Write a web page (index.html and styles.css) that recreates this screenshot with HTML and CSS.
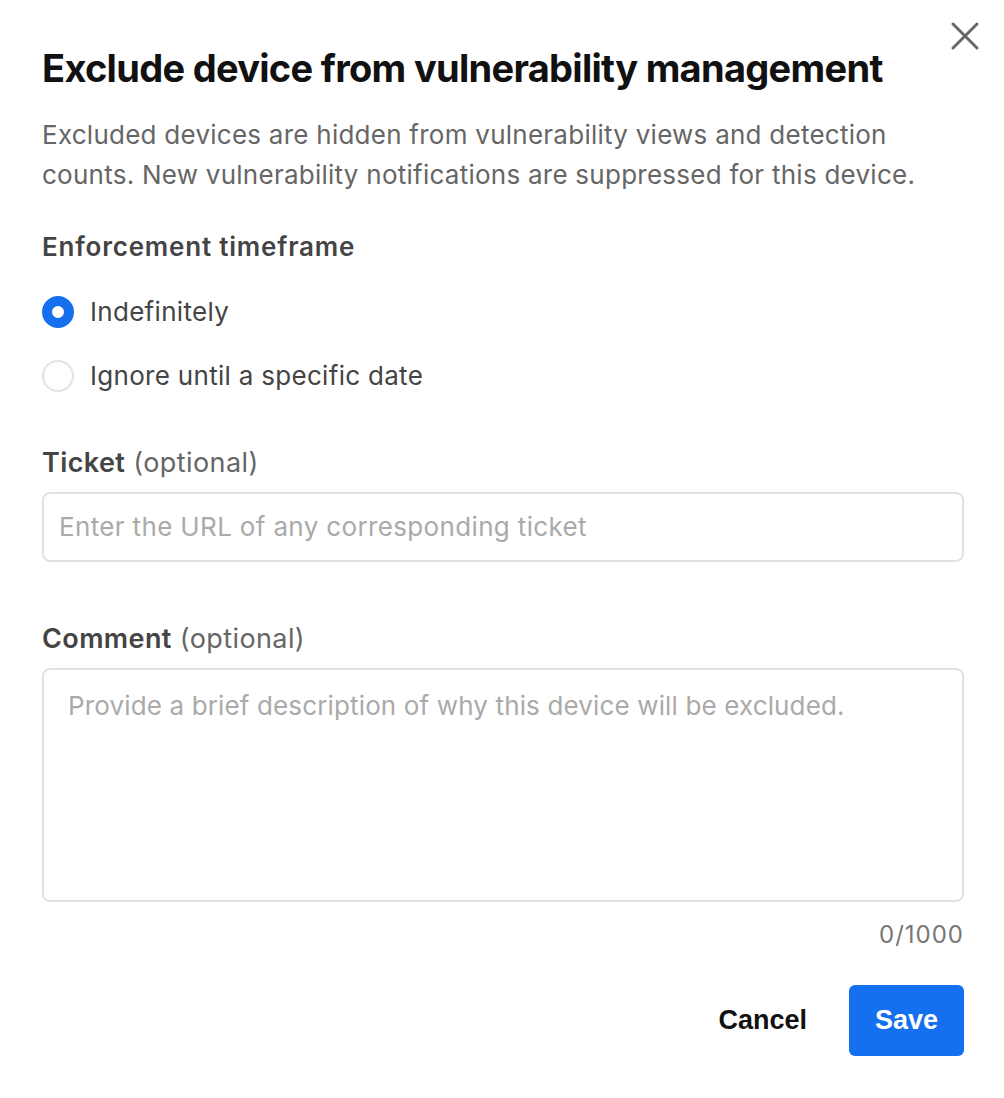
FILE: index.html
```html
<!DOCTYPE html>
<html>
<head>
<meta charset="utf-8">
<link rel="stylesheet" href="styles.css">
</head>
<body>
<div class="modal">
  <button class="close" aria-label="Close">
    <svg width="30" height="30" viewBox="0 0 30 30"><path d="M3 3 L27 27 M27 3 L3 27" stroke="#666" stroke-width="3" stroke-linecap="round" fill="none"/></svg>
  </button>
  <h1 class="title">Exclude device from vulnerability management</h1>
  <p class="desc">Excluded devices are hidden from vulnerability views and detection counts. New vulnerability notifications are suppressed for this device.</p>
  <div class="section-label">Enforcement timeframe</div>
  <div class="radios">
    <label class="radio"><span class="dot checked"></span><span>Indefinitely</span></label>
    <label class="radio"><span class="dot"></span><span>Ignore until a specific date</span></label>
  </div>
  <div class="field ticket">
    <div class="label"><b>Ticket</b> <span>(optional)</span></div>
    <div class="input"><span class="ph">Enter the URL of any corresponding ticket</span></div>
  </div>
  <div class="field comment">
    <div class="label"><b>Comment</b> <span>(optional)</span></div>
    <div class="textarea"><span class="ph ph-long">Provide a brief description of why this device will be excluded.</span></div>
    <div class="count">0/1000</div>
  </div>
  <div class="actions">
    <button class="cancel">Cancel</button>
    <button class="save">Save</button>
  </div>
</div>
</body>
</html>
```
FILE: styles.css
```css
html, body { margin: 0; padding: 0; background: #fff; }
body { font-family: Inter, "Noto Sans", sans-serif; color: #444; }
.modal { position: relative; width: 1004px; height: 1098px; box-sizing: border-box; padding: 42px 40px 0 42px; }
.close { position: absolute; top: 21px; right: 24px; background: none; border: 0; padding: 0; width: 30px; height: 30px; cursor: pointer; }
.title { margin: 0; font-size: 38px; font-weight: 700; color: #111; letter-spacing: -0.7px; line-height: 52px; }
.desc { margin: 21px 0 0; font-size: 26px; line-height: 40px; color: #666; letter-spacing: 0.25px; max-width: 900px; }
.section-label { margin-top: 35px; font-size: 26px; font-weight: 600; line-height: 34px; color: #444; letter-spacing: 0.8px; }
.radios { display: flex; flex-direction: column; gap: 24px; margin-top: 28px; }
.radio { display: flex; align-items: center; gap: 16px; font-size: 26px; line-height: 40px; color: #444; letter-spacing: 0.3px; }
.dot { width: 32px; height: 32px; box-sizing: border-box; border-radius: 50%; border: 2px solid #e2e2e2; background: #fff; }
.dot.checked { border: 10px solid #1570ef; }
.field { display: flex; flex-direction: column; }
.ticket { margin-top: 49px; }
.comment { margin-top: 59px; }
.label { font-size: 27px; line-height: 36px; color: #444; letter-spacing: 0.4px; }
.label b { font-weight: 600; }
.label span { color: #666; }
.input { margin-top: 11px; height: 70px; box-sizing: border-box; border: 2px solid #e2e2e2; border-radius: 8px; display: flex; align-items: center; padding-left: 15px; }
.textarea { margin-top: 11px; height: 234px; box-sizing: border-box; border: 2px solid #e2e2e2; border-radius: 8px; padding: 18px 24px; }
.ph { font-size: 26px; color: #aaa; line-height: 36px; letter-spacing: 0.35px; }
.ph-long { letter-spacing: 0.14px; }
.count { align-self: flex-end; margin-top: 18px; font-size: 24px; line-height: 30px; color: #777; letter-spacing: 1px; }
.actions { display: flex; justify-content: flex-end; align-items: center; gap: 42px; margin-top: 35px; }
.actions button { font-family: "Liberation Sans", Arial, sans-serif; font-weight: 700; font-size: 27px; border: 0; cursor: pointer; }
.cancel { background: none; color: #111; padding: 0; }
.save { background: #1570ef; color: #fff; width: 115px; height: 71px; border-radius: 6px; padding: 0; }
```
